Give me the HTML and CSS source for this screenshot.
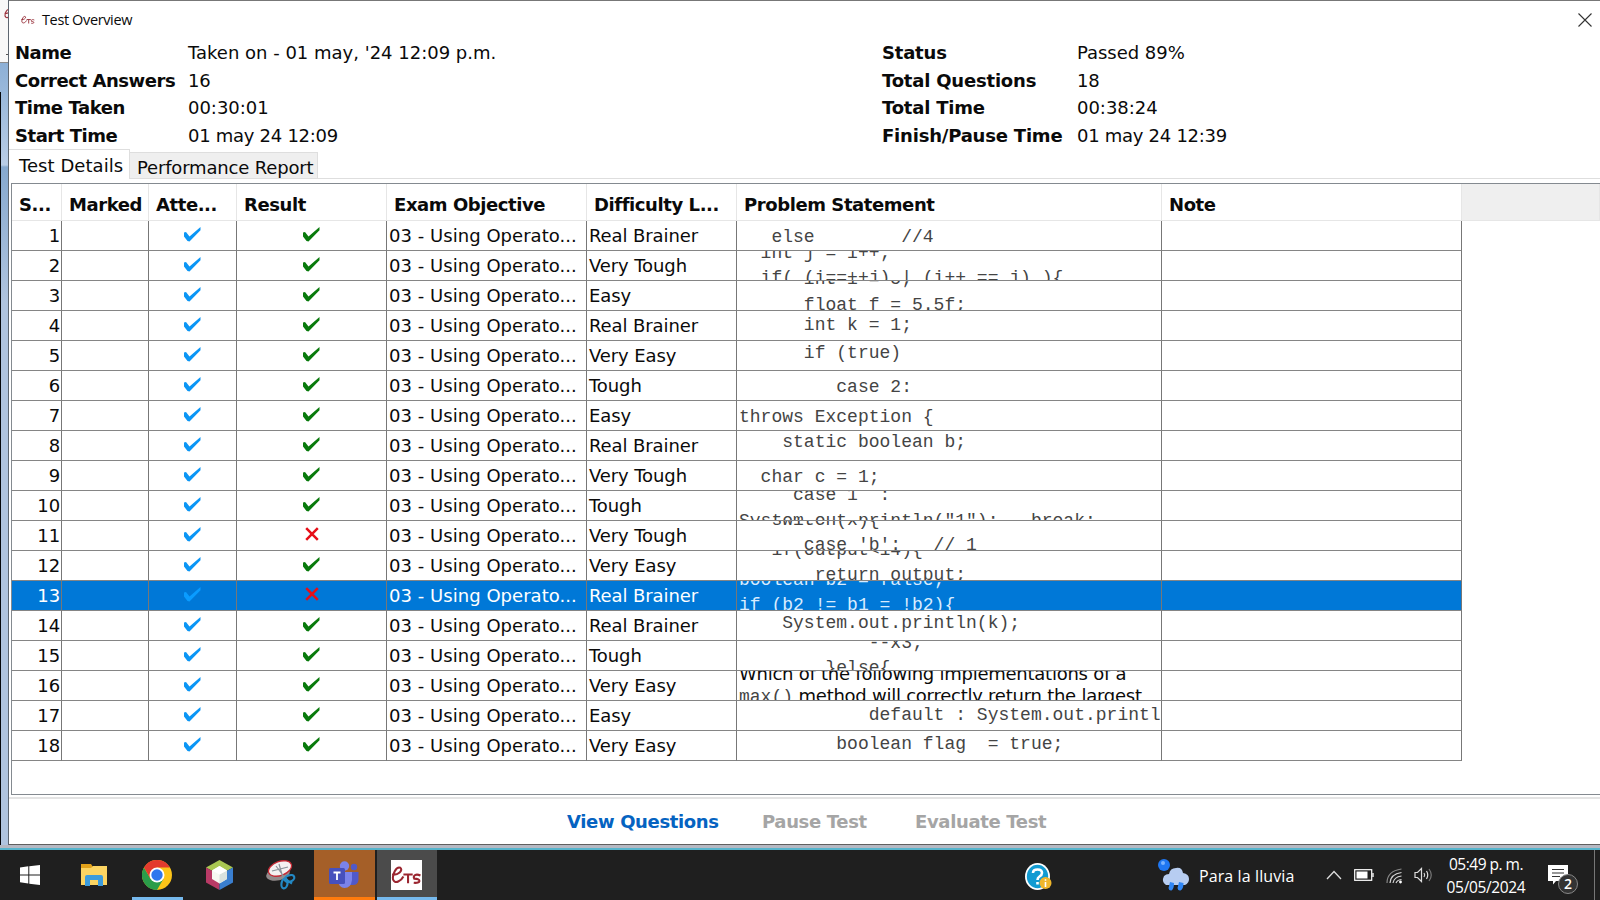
FILE: index.html
```html
<!DOCTYPE html>
<html lang="es">
<head>
<meta charset="utf-8">
<title>Test Overview</title>
<link rel="stylesheet" href="styles.css">
</head>
<body>
<svg class="defs" width="0" height="0">
  <symbol id="check" viewBox="0 0 17 15"><path d="M0 5.500 2 5 5.500 9.500 16.500 0V3.200L5.500 14.500 3.500 14 0 9.500Z"/></symbol>
  <symbol id="cross" viewBox="0 0 14 14"><path d="M1.200 1.200 12.800 12.800M12.800 1.200 1.200 12.800" fill="none" stroke="currentColor" stroke-width="2.500"/></symbol>
  <symbol id="ets" viewBox="0 0 30 18"><path d="M1 8C7 9 12 4 9 1.500 5 0 1 8 2 13 4 18 10 14 12 10M12 8H21M16.500 8V16.500M28.500 9C24 7 21 9 22.500 12 29.500 12 29 17 22 16" fill="none" stroke="currentColor" stroke-width="2"/></symbol>
</svg>
<div class="workspace">
  <aside class="behind">
    <div class="behind-title"><svg class="behind-logo"><use href="#ets"/></svg><i class="behind-dash"></i></div>
    <div class="behind-body"></div>
  </aside>
  <main class="window">
    <header class="titlebar">
      <svg class="app-icon"><use href="#ets"/></svg>
      <span class="title">Test Overview</span>
      <svg class="close" viewBox="0 0 14 14"><path d="M.5.5 13.500 13.500M13.500.5.5 13.500" fill="none" stroke="#333" stroke-width="1.100"/></svg>
    </header>
    <section class="summary">
      <dl class="facts left">
        <dt>Name</dt><dd class="taken">Taken on - 01 may, '24 12:09 p.m.</dd>
        <dt>Correct Answers</dt><dd>16</dd>
        <dt>Time Taken</dt><dd class="time">00:30:01</dd>
        <dt>Start Time</dt><dd>01 may 24 12:09</dd>
      </dl>
      <dl class="facts right">
        <dt>Status</dt><dd class="time">Passed 89%</dd>
        <dt>Total Questions</dt><dd>18</dd>
        <dt>Total Time</dt><dd class="time">00:38:24</dd>
        <dt>Finish/Pause Time</dt><dd>01 may 24 12:39</dd>
      </dl>
    </section>
    <nav class="tabs"><span class="tab active">Test Details</span><span class="tab">Performance Report</span><span class="tab-rest"></span></nav>
    <section class="panel">
      <div class="row head">
        <span>S...</span><span>Marked</span><span>Atte...</span><span>Result</span><span>Exam Objective</span><span>Difficulty L...</span><span>Problem Statement</span><span>Note</span><span class="filler"></span>
      </div>
      <div id="rows"></div>
    </section>
    <footer class="actions"><b class="view">View Questions</b><b class="pause">Pause Test</b><b class="evaluate">Evaluate Test</b></footer>
  </main>
</div>
<div class="edge"></div>
<div class="taskbar">
  <div class="slot first"><svg width="20" height="20" viewBox="0 0 20 20"><path fill="#fff" d="M0 2.500 8.300 1.300V9.400H0ZM9.300 1.200 20 0V9.400H9.300ZM0 10.400H8.300V18.500L0 17.300ZM9.300 10.400H20V20L9.300 18.700Z"/></svg></div>
  <div class="slot"><svg width="28" height="24" viewBox="0 0 28 24"><path fill="#e3a21a" d="M1 1H11L13 4V8H1Z"/><path fill="#fcd462" d="M1 5H11L13 3H27V22H1Z"/><path fill="#3c9bdc" d="M5 23V14Q5 12 7 12H21Q23 12 23 14V23H18V17H10V23Z"/></svg></div>
  <div class="slot chrome"><svg width="30" height="30" viewBox="0 0 30 30"><circle cx="15" cy="15" r="15" fill="#fcc419"/><path fill="#2a9d4a" d="M2 7.500A15 15 0 0 0 15 30L21.500 18.700H8.500Z"/><path fill="#e33b2e" d="M2 7.500A15 15 0 0 1 28 7.500H15L8.500 18.700Z"/><circle cx="15" cy="15" r="7.500" fill="#fff"/><circle cx="15" cy="15" r="5.700" fill="#2f77ee"/></svg></div>
  <div class="slot"><svg width="27" height="30" viewBox="0 0 27 30"><path fill="#a9c752" d="M13.500 0 27 7.500 13.500 15 0 7.500Z"/><path fill="#b93a66" d="M0 7.500 13.500 15V30L0 22.500Z"/><path fill="#3a7fd0" d="M27 7.500 13.500 15V30L27 22.500Z"/><path fill="#f6f9f2" d="M13.500 6 21 10.500V19L13.500 23.500 6 19V10.500Z"/><path fill="#d9e2de" d="M13.500 14.500 21 10.500V19L13.500 23.500Z"/><path fill="#fff" d="M13.500 6 21 10.500 13.500 14.500 6 10.500Z"/></svg></div>
  <div class="slot"><svg width="30" height="30" viewBox="0 0 30 30"><ellipse cx="12" cy="14" rx="12" ry="6.500" fill="#928b8b" transform="rotate(-12 12 14)"/><ellipse cx="14" cy="8.500" rx="12" ry="7" fill="#f4f1f1" stroke="#c52a35" stroke-width="1.300" transform="rotate(-20 14 8.500)"/><path d="M13 4 17 18M6 11 22 7M10 6 19 18" stroke="#8b9299" stroke-width="1.200"/><g fill="none" stroke="#2389c5" stroke-width="2.200"><ellipse cx="23.500" cy="18.500" rx="5" ry="3.200" transform="rotate(-20 23.500 18.500)"/><ellipse cx="18.500" cy="23.500" rx="3" ry="5" transform="rotate(10 18.500 23.500)"/><path d="M19 19 26 23.500"/></g></svg></div>
  <div class="slot teams"><svg width="30" height="30" viewBox="0 0 30 30"><circle cx="15.500" cy="6" r="4.700" fill="#7b83eb"/><circle cx="25" cy="7" r="3.200" fill="#5059c9"/><path fill="#5059c9" d="M21 12H29.500V20Q29 25 24 25H21Z"/><path fill="#7b83eb" d="M9 12H23V20Q22 28 15.500 28 10 28 9 21Z"/><rect y="8" width="16" height="16" rx="1.500" fill="#4650bd"/><path d="M4.500 12.500H11.500M8 12.500V20" stroke="#fff" stroke-width="1.800"/></svg></div>
  <div class="slot ets"><span class="ets-tile"><svg width="31" height="19"><use href="#ets"/></svg></span></div>
  <div class="tray">
    <svg class="help" width="27" height="28" viewBox="0 0 27 28"><ellipse cx="12.500" cy="13.500" rx="12.500" ry="13.500" fill="#fff"/><ellipse cx="12.500" cy="13.500" rx="10.700" ry="11.700" fill="#129bd2"/><path d="M8 10Q8 6.500 12.500 6.500 17 6.500 17 10 17 12 14.500 13.500 12.500 14.700 12.500 17M12.500 19V21.500" fill="none" stroke="#fff" stroke-width="2.600"/><circle cx="20.500" cy="20" r="6" fill="#efb62b"/><path d="M20.500 16.200V17.800M20.500 19V24" stroke="#fff" stroke-width="1.600"/></svg>
    <svg class="weather" width="31" height="32" viewBox="0 -1 31 32"><circle cx="6" cy="5" r="6" fill="#1f77f2"/><circle cx="5" cy="3" r="2" fill="#76b2ff"/><path fill="#b7cdf1" d="M8 25Q3 22 6 16 8 14 11 14 12 8 18 8 24 7 25 13 31 14 31 19 31 23 27 25Z"/><path d="M12 22 10.500 28Q11 31 13.500 30.500 16 29 16 23ZM21 22 19.500 28Q20 31 22.500 30.500 25.500 29 25.500 23Z" fill="#2f86f5"/></svg>
    <span class="rain">Para la lluvia</span>
    <svg class="chev" width="16" height="10" viewBox="0 0 16 10"><path d="M1 9 8 1.500 15 9" fill="none" stroke="#ddd" stroke-width="1.300"/></svg>
    <svg class="batt" width="20" height="12" viewBox="0 0 20 12"><rect x=".7" y=".7" width="17" height="10.600" fill="none" stroke="#fff" stroke-width="1.200"/><rect x="2.500" y="2.500" width="11" height="7" fill="#fff"/><path d="M19 4V8" stroke="#fff" stroke-width="1.300"/></svg>
    <svg class="wifi" width="17" height="16" viewBox="0 0 17 16"><g fill="none" stroke="#d5d5d5" stroke-width="1.200"><path d="M1 15Q1 3 15.500 1" stroke="#888"/><path d="M4 15Q4.500 6 15.500 4.500"/><path d="M7 15Q8 9 15.500 8"/><path d="M10 15Q11 12 15.500 11.500"/></g><circle cx="14.500" cy="14" r="1.400" fill="#fff"/></svg>
    <svg class="vol" width="19" height="16" viewBox="0 0 19 16"><g fill="none" stroke="#ddd" stroke-width="1.200"><path d="M1 5.500H3.500L7.500 1.500V14.500L3.500 10.500H1Z"/><path d="M10 6Q11.500 8 10 10M12.500 4Q15 8 12.500 12"/><path d="M15 2Q19.500 8 15 14" stroke="#777"/></g></svg>
    <div class="clock"><span>05:49 p. m.</span><span class="date">05/05/2024</span></div>
    <div class="notes"><svg width="20" height="20" viewBox="0 0 20 20"><path fill="#fff" d="M0 0H20V16H8L5 19.500V16H0Z"/><path d="M4 4.500H16M4 8H16M4 11.500H12" stroke="#333" stroke-width="1.200"/></svg><span class="badge">2</span></div>
  </div>
</div>
<script src="app.js"></script>
</body>
</html>
```
FILE: styles.css
```css
* { box-sizing: border-box; }
body { margin: 0; width: 1600px; height: 900px; overflow: hidden; background: #fff; color: #0a0a0a; font: 18px "DejaVu Sans", Verdana, sans-serif; display: flex; flex-direction: column; }
.defs { position: absolute; }
.workspace { height: 845px; display: flex; }
.behind { width: 9px; overflow: hidden; display: flex; flex-direction: column; border-right: 1px solid #5d6670; }
.behind-title { height: 63px; background: #f8f8f8; border-bottom: 1px solid #8c8c8c; padding-top: 8px; }
.behind-logo { display: block; width: 17px; height: 12px; margin-left: 4px; color: #9d3540; }
.behind-dash { display: block; width: 3px; height: 1px; margin: 34px 0 0 6px; background: #555; }
.behind-body { flex: 1; background: linear-gradient(90deg, #05070a 1px, transparent 1px) 0 29px no-repeat, linear-gradient(#8db0d6, #b9cde6 102px, #86a9cf 104px, #b0c4de 240px, #b0c4de); }
.window { width: 1591px; height: 845px; display: flex; flex-direction: column; border-top: 1px solid #777; border-bottom: 1px solid #5f5f5f; background: #fff; }
.titlebar, .summary, .tabs, .panel { flex: none; }
.titlebar { height: 37px; display: flex; align-items: center; padding: 0 8px 0 12px; }
.app-icon { width: 14px; height: 10px; color: #98303a; }
.title { margin-left: 7px; font: 14.5px "Open Sans", sans-serif; letter-spacing: -.37px; flex: 1; }
.close { width: 14px; height: 14px; }
.summary { height: 111px; display: flex; }
.facts { margin: 0; display: grid; grid-template-rows: 28px 27px 28px 27px; line-height: 29px; white-space: nowrap; }
.facts dt { font-weight: bold; letter-spacing: -.45px; }
.facts.right dt { letter-spacing: -.2px; }
.facts dd { margin: 0; letter-spacing: -.28px; }
.facts .taken { letter-spacing: 0; }
.facts .time { letter-spacing: -.03px; }
.left { width: 867px; padding-left: 6px; grid-template-columns: 173px auto; }
.right { padding-left: 6px; grid-template-columns: 195px auto; }
.tabs { height: 30px; display: flex; align-items: flex-end; white-space: nowrap; letter-spacing: -.17px; }
.tab { width: 188px; height: 27px; padding-left: 7px; line-height: 29px; background: #efefef; border: 1px solid #dedede; border-left: 0; }
.tab.active { width: 121px; height: 30px; padding-left: 10px; line-height: 31px; background: #fff; border-bottom: 0; letter-spacing: .05px; }
.tab-rest { flex: 1; height: 1px; background: #dedede; }
.panel { height: 612px; margin: 4px 0 0 2px; border: 1px solid #848a90; border-right: 0; }
.row { height: 30px; display: grid; grid-template-columns: 50px 87px 88px 150px 200px 150px 425px 300px 1fr; }
.row > span { min-width: 0; border-right: 1px solid #777; border-bottom: 1px solid #858585; overflow: hidden; white-space: nowrap; line-height: 30px; letter-spacing: -.1px; padding-left: 2px; }
.row.head { height: 37px; }
.row.head > span { border-color: #e6e6e6; font-weight: bold; line-height: 42px; padding-left: 7px; letter-spacing: -.42px; }
.row.head .filler { background: #efefef; }
.row > .num { text-align: right; padding: 0 1px 0 0; }
.row > .mark { display: flex; justify-content: center; padding: 6px 0 0 0; }
.row > .objective { letter-spacing: .04px; }
.mark svg { width: 17px; height: 15px; }
.mark .wrong { width: 14px; height: 14px; color: #e60f17; }
.attempted { fill: #0b96f5; }
.right-answer { fill: #087a0c; }
.row.selected > span { background: #0078d7; color: #fff; }
.selected .attempted { fill: #0a9cff; }
.row > .problem { padding-left: 2px; }
.line { display: block; height: 25px; line-height: 25px; font-family: "Liberation Mono", "Courier New", monospace; font-size: 18px; letter-spacing: .01px; white-space: pre; color: #444; }
.selected .line { color: #d8ecff; }
.line.prose { font-family: "DejaVu Sans", sans-serif; color: #0a0a0a; letter-spacing: -.25px; }
.line .prose { display: inline; }
.actions { flex: 1; margin-top: 2px; border-top: 2px solid #e4e4e4; display: flex; line-height: 46px; letter-spacing: -.35px; color: #a5a5a5; padding-left: 558px; white-space: nowrap; overflow: hidden; }
.view { width: 195px; color: #0563c1; }
.pause { width: 153px; }
.edge { height: 5px; background: #b5b8c2; border-bottom: 2px solid #55b4cc; }
.taskbar { height: 50px; background: #1f1f1f; display: flex; color: #fff; font-family: "Open Sans", sans-serif; }
.slot { width: 62px; display: flex; align-items: center; justify-content: center; }
.slot.first { width: 60px; margin-right: 3px; }
.slot.chrome { width: 51px; margin: 0 5px 0 7px; border-bottom: 3px solid #76b9ed; padding: 3px 2px 0 0; }
.slot.teams { width: 61px; margin-left: 2px; background: #a55f28; border-bottom: 3px solid #ff7b0d; padding: 3px 2px 0 0; }
.slot.ets { width: 60px; margin-left: 2px; background: #4b4b4b; border-bottom: 3px solid #76b9ed; padding: 3px 2px 0 0; }
.ets-tile { width: 31px; height: 30px; background: #fff; color: #9b2630; display: flex; align-items: center; justify-content: center; }
.tray { flex: 1; display: flex; align-items: center; margin-left: 588px; margin-right: 5px; border-right: 1px solid #777; white-space: nowrap; }
.tray > * { flex: none; }
.help { margin: 3px 106px 0 0; }
.rain { width: 137px; padding: 2px 0 0 10px; font-size: 16px; letter-spacing: .1px; }
.chev { margin-right: 12px; }
.batt { margin-right: 12px; }
.wifi { margin: 2px 11px 0 0; }
.vol { margin-right: 13px; }
.clock { width: 80px; display: flex; flex-direction: column; align-items: center; line-height: 23px; font-size: 15.5px; letter-spacing: -.5px; padding-top: 1px; }
.clock .date { letter-spacing: -.35px; }
.notes { position: relative; width: 20px; height: 20px; margin-left: 22px; }
.notes svg { display: block; }
.badge { position: absolute; left: 10px; top: 9px; width: 20px; height: 20px; border: 1px solid #888; border-radius: 50%; background: #333; font: 600 14px/18px "Open Sans", sans-serif; text-align: center; }
```
FILE: app.js
```js
// Each line is [baseline offset inside the row, text]
const rows = [
  ["Real Brainer", [[22, "   else        //4"]]],
  ["Very Tough", [[8, "  int j = i++;"], [33, "  if( (i==++j) | (i++ == j) ){"]]],
  ["Easy", [[4, "      int i = 5;"], [30, "      float f = 5.5f;"]]],
  ["Real Brainer", [[20, "      int k = 1;"]]],
  ["Very Easy", [[18, "      if (true)"]]],
  ["Tough", [[22, "         case 2:"]]],
  ["Easy", [[22, "throws Exception {"]]],
  ["Real Brainer", [[17, "    static boolean b;"]]],
  ["Very Tough", [[22, "  char c = 1;"]]],
  ["Tough", [[10, "     case 1  :"], [36, "System.out.println(\"1\");   break;"]]],
  ["Very Tough", [[5, "   switch(x){"], [30, "      case 'b':   // 1"]], false],
  ["Very Easy", [[5, "   if(output<14){"], [30, "       return output;"]]],
  ["Real Brainer", [[5, "boolean b2 = false;"], [30, "if (b2 != b1 = !b2){"]], false, true],
  ["Real Brainer", [[18, "    System.out.println(k);"]]],
  ["Tough", [[8, "            --x3;"], [33, "        }else{"]]],
  ["Very Easy", [[8, "Which of the following implementations of a", "prose"], [30, "max() method will correctly return the largest", "mixed"]]],
  ["Easy", [[20, "            default : System.out.printl"]]],
  ["Very Easy", [[19, "         boolean flag  = true;"]]]
];

const escape = s => s.replace(/&/g, "&amp;").replace(/</g, "&lt;");

function line([base, text, kind], previous) {
  const gap = previous ? base - previous[0] - 25 : base - 18;
  const content = kind === "mixed"
    ? `max()<span class="line prose">${escape(text.slice(5))}</span>`
    : escape(text);
  return `<span class="line ${kind === "prose" ? "prose" : ""}" style="margin-top:${gap}px">${content}</span>`;
}

document.getElementById("rows").innerHTML = rows.map(([level, lines, correct = true, selected], i) => `
  <div class="row${selected ? " selected" : ""}">
    <span class="num">${i + 1}</span><span></span>
    <span class="mark"><svg class="attempted"><use href="#check"/></svg></span>
    <span class="mark">${correct ? '<svg class="right-answer"><use href="#check"/></svg>' : '<svg class="wrong"><use href="#cross"/></svg>'}</span>
    <span class="objective">03 - Using Operato...</span><span>${level}</span>
    <span class="problem">${lines.map((l, n) => line(l, lines[n - 1])).join("")}</span>
    <span></span>
  </div>`).join("");
```
